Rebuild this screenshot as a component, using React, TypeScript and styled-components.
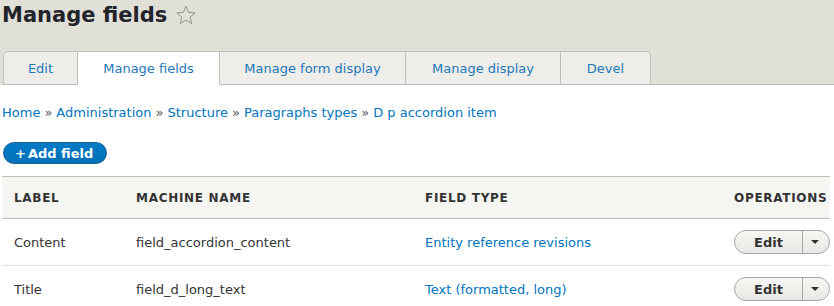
import styled, { createGlobalStyle } from 'styled-components';

const GlobalStyle = createGlobalStyle`
  html, body {
    margin: 0;
    padding: 0;
    background: #fff;
    font-family: "DejaVu Sans", "Liberation Sans", sans-serif;
    font-size: 13px;
    color: #333;
  }
`;

const Header = styled.header`
  background: #e0e0d8;
  padding: 0 0 0 2px;
`;

const TitleRow = styled.div`
  display: flex;
  align-items: center;
  gap: 8px;
  height: 30px;
`;

const PageTitle = styled.h1`
  margin: 0;
  font-size: 21px;
  line-height: 30px;
  font-weight: 700;
  color: #232429;
`;

const StarIcon = styled.svg`
  width: 22px;
  height: 22px;
  margin-top: -1px;
`;

const TabBar = styled.ul`
  list-style: none;
  margin: 21px 0 0 0;
  padding: 0 0 0 1px;
  display: flex;
  border-bottom: 1px solid #bfbfba;
  height: 33px;
`;

const Tab = styled.li<{ $active?: boolean; $first?: boolean; $last?: boolean; $w: number }>`
  box-sizing: border-box;
  height: 34px;
  margin-bottom: -1px;
  display: flex;
  align-items: center;
  justify-content: center;
  background: ${(p) => (p.$active ? '#fff' : '#ededea')};
  border: 1px solid #bfbfba;
  border-bottom-color: ${(p) => (p.$active ? '#fff' : '#bfbfba')};
  border-left-width: ${(p) => (p.$first ? 1 : 0)}px;
  border-radius: ${(p) => (p.$first ? '5px 0 0 0' : p.$last ? '0 5px 0 0' : '0')};
  color: #1f78b8;
  font-size: 13px;
  width: ${(p) => p.$w}px;
`;

const Content = styled.main`
  padding: 0 4px 0 2px;
`;

const Breadcrumb = styled.nav`
  margin-top: 18px;
  line-height: 20px;
  font-size: 13px;
  color: #0074bd;
`;

const Sep = styled.span`
  color: #555;
  margin: 0 4px;
`;

const AddButton = styled.button`
  margin-top: 19px;
  margin-left: 1px;
  display: inline-flex;
  align-items: center;
  height: 22px;
  padding: 0 13px 0 11px;
  border: 1px solid #1e5c90;
  border-radius: 20px;
  background: linear-gradient(#007bc6, #0071b8);
  color: #fff;
  font-family: "DejaVu Sans", sans-serif;
  font-size: 13px;
  font-weight: 700;
  box-sizing: border-box;
`;

const Plus = styled.span`
  margin-right: 2px;
`;

const Table = styled.table`
  margin-top: 12px;
  width: 828px;
  border-collapse: collapse;
  table-layout: fixed;
`;

const HeadCell = styled.th<{ $w: number }>`
  width: ${(p) => p.$w}px;
  box-sizing: border-box;
  height: 42px;
  padding: 0 0 0 12px;
  text-align: left;
  background: #f5f5f2;
  border-top: 1px solid #bfbfba;
  border-bottom: 1px solid #bfbfba;
  font-size: 12px;
  font-weight: 700;
  text-transform: uppercase;
  letter-spacing: 0.7px;
  color: #333;
  white-space: nowrap;
`;

const Cell = styled.td`
  height: 46px;
  padding: 0 0 0 12px;
  border-bottom: 1px solid #e6e4df;
  font-size: 13px;
  color: #333;
`;

const LinkText = styled.span`
  color: #0074bd;
`;

const DropButton = styled.div`
  display: inline-flex;
  height: 24px;
  box-sizing: border-box;
  border: 1px solid #a6a6a6;
  border-radius: 12px;
  background: linear-gradient(#f6f6f3, #e8e8e4);
  overflow: hidden;
`;

const DropMain = styled.span`
  width: 67px;
  display: flex;
  align-items: center;
  justify-content: center;
  font-weight: 700;
  font-size: 13px;
  color: #333;
  border-right: 1px solid #a6a6a6;
`;

const DropToggle = styled.span`
  width: 26px;
  display: flex;
  align-items: center;
  justify-content: center;
`;

const Caret = styled.span`
  width: 0;
  height: 0;
  border-left: 4px solid transparent;
  border-right: 4px solid transparent;
  border-top: 4px solid #333;
  margin-right: 2px;
`;

const tabs = [
  { label: 'Edit', w: 75 },
  { label: 'Manage fields', w: 142, active: true },
  { label: 'Manage form display', w: 186 },
  { label: 'Manage display', w: 155 },
  { label: 'Devel', w: 90 },
];

const rows = [
  { label: 'Content', machine: 'field_accordion_content', type: 'Entity reference revisions' },
  { label: 'Title', machine: 'field_d_long_text', type: 'Text (formatted, long)' },
];

const crumbs = ['Home', 'Administration', 'Structure', 'Paragraphs types', 'D p accordion item'];

export default function App() {
  return (
    <>
      <GlobalStyle />
      <Header>
        <TitleRow>
          <PageTitle>Manage fields</PageTitle>
          <StarIcon viewBox="0 0 24 24">
            <path
              d="M12 2.5l2.9 6.6 7.1.6-5.4 4.7 1.6 7-6.2-3.7-6.2 3.7 1.6-7L2 9.7l7.1-.6z"
              fill="none"
              stroke="#8a8a86"
              strokeWidth="1"
              strokeLinejoin="round"
            />
          </StarIcon>
        </TitleRow>
        <TabBar>
          {tabs.map((t, i) => (
            <Tab
              key={t.label}
              $active={t.active}
              $first={i === 0}
              $last={i === tabs.length - 1}
              $w={t.w}
            >
              {t.label}
            </Tab>
          ))}
        </TabBar>
      </Header>
      <Content>
        <Breadcrumb>
          {crumbs.map((c, i) => (
            <span key={c}>
              {i > 0 && <Sep>»</Sep>}
              {c}
            </span>
          ))}
        </Breadcrumb>
        <AddButton>
          <Plus>+</Plus>Add field
        </AddButton>
        <Table>
          <thead>
            <tr>
              <HeadCell $w={122}>Label</HeadCell>
              <HeadCell $w={289}>Machine name</HeadCell>
              <HeadCell $w={309}>Field type</HeadCell>
              <HeadCell $w={108}>Operations</HeadCell>
            </tr>
          </thead>
          <tbody>
            {rows.map((r) => (
              <tr key={r.machine}>
                <Cell>{r.label}</Cell>
                <Cell>{r.machine}</Cell>
                <Cell>
                  <LinkText>{r.type}</LinkText>
                </Cell>
                <Cell>
                  <DropButton>
                    <DropMain>Edit</DropMain>
                    <DropToggle>
                      <Caret />
                    </DropToggle>
                  </DropButton>
                </Cell>
              </tr>
            ))}
          </tbody>
        </Table>
      </Content>
    </>
  );
}
